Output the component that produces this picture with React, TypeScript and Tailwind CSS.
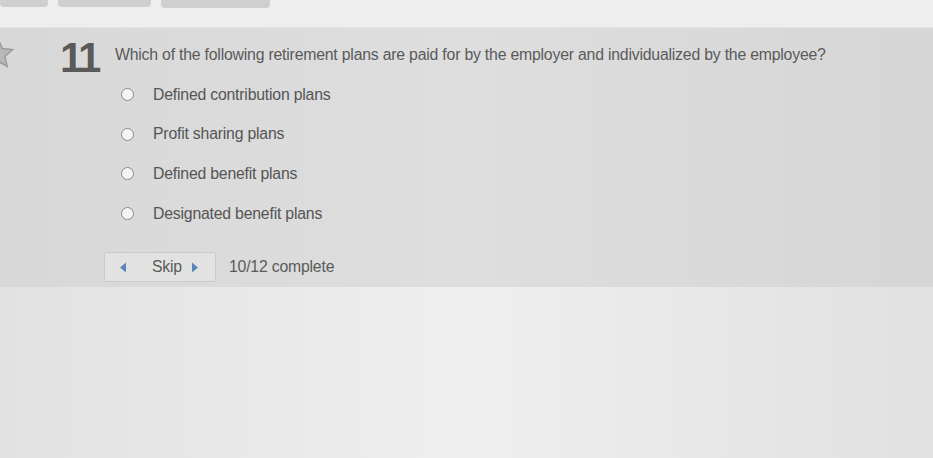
import React, { useState } from "react";

const options = [
  "Defined contribution plans",
  "Profit sharing plans",
  "Defined benefit plans",
  "Designated benefit plans",
];

const App: React.FC = () => {
  const [picked, setPicked] = useState<number | null>(null);

  return (
    <div
      className="w-[933px] h-[458px] overflow-hidden bg-[#e9e9e9] flex flex-col"
      style={{ fontFamily: '"Liberation Sans", Arial, sans-serif' }}
    >
      {/* top tab strip */}
      <div className="h-[28px] bg-[#eeeeee] flex items-start gap-[10px] border-b border-[#e4e4e4]">
        <div className="w-[48px] h-[7px] bg-[#cfcfcf] rounded-b" />
        <div className="w-[93px] h-[7px] bg-[#cfcfcf] rounded-b" />
        <div className="w-[109px] h-[8px] bg-[#cfcfcf] rounded-b" />
      </div>

      {/* question panel */}
      <div className="h-[259px] bg-gradient-to-r from-[#d8d8d8] via-[#dedede] to-[#d6d6d6] flex">
        <div className="w-[60px] relative">
          <svg className="absolute left-[-20px] top-[8px]" width="36" height="36" viewBox="0 0 24 24">
            <path
              d="M12 2l2.9 6.3 6.8.7-5.1 4.6 1.5 6.7L12 16.8 5.9 20.3l1.5-6.7L2.3 9l6.8-.7z"
              fill="#b8b8b8"
              stroke="#9a9a9a"
              strokeWidth="1"
            />
          </svg>
        </div>
        <div className="flex flex-col">
          <div className="flex items-start pt-[12px]">
            <span className="text-[42px] leading-[36px] font-bold text-[#5a5a5a] tracking-[-3px] w-[55px]">11</span>
            <p className="text-[15.8px] text-[#5a5a5a] pt-[3px] tracking-[-0.2px]">
              Which of the following retirement plans are paid for by the employer and individualized by the employee?
            </p>
          </div>
          <div className="flex flex-col gap-[20.7px] mt-[9px] pl-[61px]">
            {options.map((opt, i) => (
              <label key={opt} className="flex items-center gap-[19px] cursor-pointer h-[19px]">
                <span
                  onClick={() => setPicked(i)}
                  className="w-[13px] h-[13px] rounded-full border border-[#8a8a8a] bg-[#f4f4f4] flex items-center justify-center"
                >
                  {picked === i && <span className="w-[5px] h-[5px] rounded-full bg-[#555]" />}
                </span>
                <span className="text-[15.8px] text-[#555555] tracking-[-0.2px]">{opt}</span>
              </label>
            ))}
          </div>
          <div className="flex items-center mt-[29px] pl-[44px] gap-[13px]">
            <button className="w-[112px] h-[30px] border border-[#cbcbcb] bg-[#e2e2e2] rounded-[2px] flex items-center px-[14px]">
              <svg width="8" height="11" viewBox="0 0 8 11">
                <path d="M7 0.5L1 5.5l6 5z" fill="#5a86b8" />
              </svg>
              <span className="text-[15.8px] text-[#5a5a5a] tracking-[-0.2px] ml-[25px]">Skip</span>
              <svg className="ml-[9px]" width="8" height="11" viewBox="0 0 8 11">
                <path d="M1 0.5L7 5.5l-6 5z" fill="#5a86b8" />
              </svg>
            </button>
            <span className="text-[15.8px] text-[#5a5a5a] tracking-[-0.2px]">10/12 complete</span>
          </div>
        </div>
      </div>

      <div className="flex-1 bg-gradient-to-r from-[#e2e2e2] via-[#efefef] to-[#e1e1e1]" />
    </div>
  );
};

export default App;
